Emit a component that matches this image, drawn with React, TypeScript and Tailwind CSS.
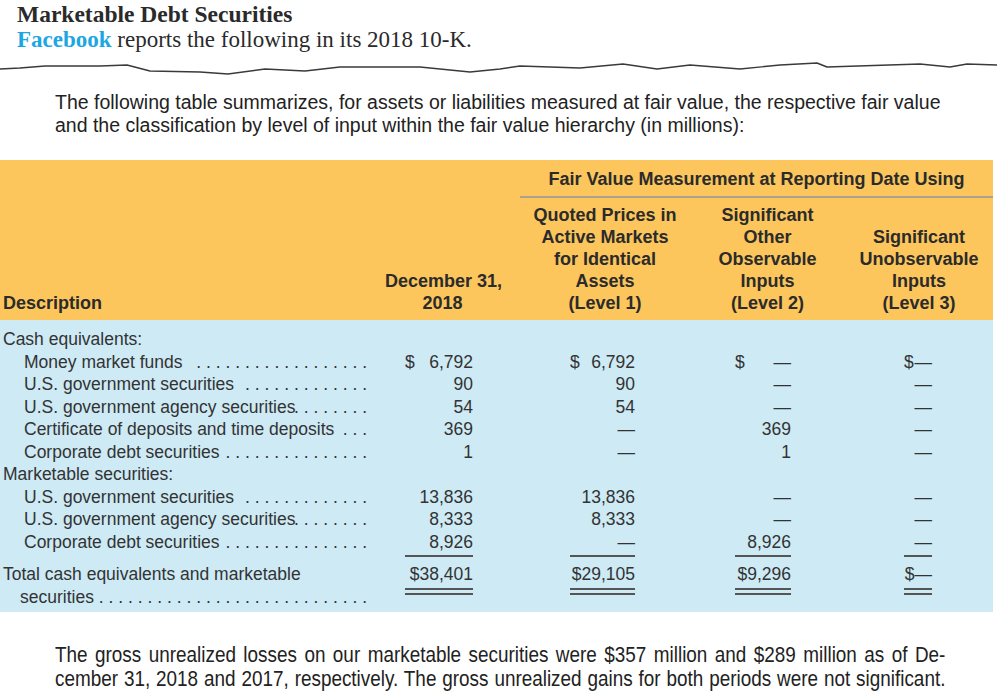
type Cell = { dollar?: boolean; text: string } | null

type Row = {
  label: string
  heading?: boolean
  dots?: number
  spaced?: boolean
  dec?: Cell
  l1?: Cell
  l2?: Cell
  l3?: Cell
}

const DASH = "\u2014"

const rows: Row[] = [
  { label: "Cash equivalents:", heading: true },
  {
    label: "Money market funds",
    dots: 18,
    spaced: true,
    dec: { dollar: true, text: "6,792" },
    l1: { dollar: true, text: "6,792" },
    l2: { dollar: true, text: DASH },
    l3: { dollar: true, text: DASH }
  },
  {
    label: "U.S. government securities",
    dots: 13,
    spaced: true,
    dec: { text: "90" },
    l1: { text: "90" },
    l2: { text: DASH },
    l3: { text: DASH }
  },
  {
    label: "U.S. government agency securities",
    dots: 8,
    dec: { text: "54" },
    l1: { text: "54" },
    l2: { text: DASH },
    l3: { text: DASH }
  },
  {
    label: "Certificate of deposits and time deposits",
    dots: 3,
    dec: { text: "369" },
    l1: { text: DASH },
    l2: { text: "369" },
    l3: { text: DASH }
  },
  {
    label: "Corporate debt securities",
    dots: 15,
    dec: { text: "1" },
    l1: { text: DASH },
    l2: { text: "1" },
    l3: { text: DASH }
  },
  { label: "Marketable securities:", heading: true },
  {
    label: "U.S. government securities",
    dots: 13,
    spaced: true,
    dec: { text: "13,836" },
    l1: { text: "13,836" },
    l2: { text: DASH },
    l3: { text: DASH }
  },
  {
    label: "U.S. government agency securities",
    dots: 8,
    dec: { text: "8,333" },
    l1: { text: "8,333" },
    l2: { text: DASH },
    l3: { text: DASH }
  },
  {
    label: "Corporate debt securities",
    dots: 15,
    dec: { text: "8,926" },
    l1: { text: DASH },
    l2: { text: "8,926" },
    l3: { text: DASH }
  }
]

const wave: [number, number][] = [
  [0, 68], [20, 67], [45, 65], [100, 65], [127, 64], [150, 70], [200, 71],
  [228, 73], [265, 68], [305, 70], [340, 66], [420, 66], [470, 71], [500, 68],
  [520, 65], [580, 67], [623, 63], [657, 68], [690, 64], [740, 68], [780, 64],
  [817, 62], [827, 66], [920, 63], [950, 66], [967, 63], [997, 64]
]

function Dots({ count }: { count: number }) {
  return (
    <span className="flex min-w-0 flex-1 justify-end whitespace-nowrap pr-[13px]">
      <span className="shrink-0 tracking-[4.9px]">{".".repeat(count)}</span>
    </span>
  )
}

function Value({ cell, box }: { cell?: Cell; box: string }) {
  if (!cell) return <span className={box} />
  return (
    <span className={`flex justify-between whitespace-nowrap ${box}`}>
      <span>{cell.dollar ? "$" : ""}</span>
      <span>{cell.text}</span>
    </span>
  )
}

// column wrappers, boxes sit with their right edge at the printed figures
const decCol = "flex w-[115px] justify-end pr-[27px]"
const l1Col = "flex w-[190px] justify-end pr-[55px]"
const l2Col = "flex w-[155px] justify-end pr-[54px]"
const l3Col = "flex w-[148px] justify-end pr-[61px]"

const decBox = "w-[68px]"
const l1Box = "w-[65px]"
const l2Box = "w-[56px]"
const l3Box = "w-[28px]"

const totalBox =
  "whitespace-nowrap border-b-[7px] border-double border-[#555] pb-[2px] text-right"

function BodyRow({ row }: { row: Row }) {
  return (
    <div className="flex h-[22.5px] leading-[22.5px]">
      <div
        className={`flex w-[385px] ${row.heading ? "pl-[3px]" : "pl-[24px]"}`}
      >
        <span
          className={`shrink-0 whitespace-nowrap ${row.spaced ? "pr-[6px]" : ""}`}
        >
          {row.label}
        </span>
        {row.dots ? <Dots count={row.dots} /> : null}
      </div>
      <div className={decCol}>
        <Value cell={row.dec} box={decBox} />
      </div>
      <div className={l1Col}>
        <Value cell={row.l1} box={l1Box} />
      </div>
      <div className={l2Col}>
        <Value cell={row.l2} box={l2Box} />
      </div>
      <div className={l3Col}>
        <Value cell={row.l3} box={l3Box} />
      </div>
    </div>
  )
}

function FairValueTable() {
  return (
    <div className="w-[993px] font-['Liberation_Sans',Arial,sans-serif]">
      <div className="whitespace-nowrap bg-[#fcc65c] pb-[6px] pt-[8px] text-[18px] font-bold leading-[22px] text-[#2b2b2b]">
        <div className="flex">
          <div className="w-[520px]" />
          <div className="flex flex-1 flex-col">
            <div className="text-center">
              Fair Value Measurement at Reporting Date Using
            </div>
            <div className="mt-[6px] h-[2px] bg-[#aaa28d]" />
          </div>
        </div>
        <div className="mt-[6px] flex items-end text-center">
          <div className="w-[385px] pl-[3px] text-left">Description</div>
          <div className="w-[115px]">
            December 31,
            <br />
            2018
          </div>
          <div className="w-[190px] pl-[20px]">
            Quoted Prices in
            <br />
            Active Markets
            <br />
            for Identical
            <br />
            Assets
            <br />
            (Level 1)
          </div>
          <div className="w-[155px]">
            Significant
            <br />
            Other
            <br />
            Observable
            <br />
            Inputs
            <br />
            (Level 2)
          </div>
          <div className="w-[148px]">
            Significant
            <br />
            Unobservable
            <br />
            Inputs
            <br />
            (Level 3)
          </div>
        </div>
      </div>

      <div className="bg-[#cdeaf5] pb-[3px] pt-[8px] text-[17.5px] text-[#333]">
        {rows.map((row, i) => (
          <BodyRow key={i} row={row} />
        ))}

        <div className="mt-[2px] flex h-[2px]">
          <div className="w-[385px]" />
          <div className={decCol}>
            <span className={`${decBox} bg-[#555]`} />
          </div>
          <div className={l1Col}>
            <span className={`${l1Box} bg-[#555]`} />
          </div>
          <div className={l2Col}>
            <span className={`${l2Box} bg-[#555]`} />
          </div>
          <div className={l3Col}>
            <span className={`${l3Box} bg-[#555]`} />
          </div>
        </div>

        <div className="mt-[6px] flex leading-[23px]">
          <div className="w-[385px] pl-[3px]">
            <div className="whitespace-nowrap">
              Total cash equivalents and marketable
            </div>
            <div className="flex pl-[17px]">
              <span className="shrink-0">securities</span>
              <Dots count={28} />
            </div>
          </div>
          <div className={`${decCol} items-start`}>
            <span className={`${decBox} ${totalBox}`}>$38,401</span>
          </div>
          <div className={`${l1Col} items-start`}>
            <span className={`${l1Box} ${totalBox}`}>$29,105</span>
          </div>
          <div className={`${l2Col} items-start`}>
            <span className={`${l2Box} ${totalBox}`}>$9,296</span>
          </div>
          <div className={`${l3Col} items-start`}>
            <span className={`${l3Box} ${totalBox}`}>${DASH}</span>
          </div>
        </div>
      </div>
    </div>
  )
}

export default function App() {
  return (
    <div className="h-[700px] w-[997px] overflow-hidden bg-white">
      <div className="pl-[17px] pt-[1px] font-['Liberation_Serif','Times_New_Roman',serif] text-[#2a2a2a]">
        <div className="text-[23.5px] font-bold leading-[26px]">
          Marketable Debt Securities
        </div>
        <div className="text-[23px] leading-[26px]">
          <span className="font-bold text-[#1da7e2]">Facebook</span> reports
          the following in its 2018 10-K.
        </div>
      </div>

      <svg className="mt-[4px] block" width="997" height="18" viewBox="0 56 997 18">
        <polyline
          points={wave.map(([x, y]) => `${x},${y}`).join(" ")}
          fill="none"
          stroke="#3a3a3a"
          strokeWidth="1.4"
          strokeLinejoin="round"
        />
      </svg>

      <p className="mt-[16px] whitespace-nowrap pl-[55px] font-['Liberation_Sans',Arial,sans-serif] text-[19.5px] leading-[23px] text-[#222]">
        The following table summarizes, for assets or liabilities measured at
        fair value, the respective fair value
        <br />
        and the classification by level of input within the fair value
        hierarchy (in millions):
      </p>

      <div className="mt-[23px]">
        <FairValueTable />
      </div>

      <div className="mt-[31px] pl-[55px]">
        <div className="w-[1060px] origin-left scale-x-[0.84] font-['Liberation_Sans',Arial,sans-serif] text-[22.5px] leading-[24px] text-[#222]">
          <div className="whitespace-nowrap [text-align-last:justify]">
            The gross unrealized losses on our marketable securities were $357
            million and $289 million as of De-
          </div>
          <div className="whitespace-nowrap [text-align-last:justify]">
            cember 31, 2018 and 2017, respectively. The gross unrealized gains
            for both periods were not significant.
          </div>
        </div>
      </div>
    </div>
  )
}
